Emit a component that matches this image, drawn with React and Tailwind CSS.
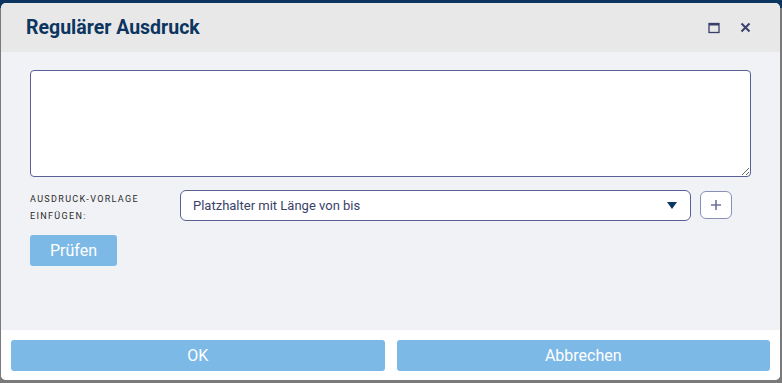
export default function App() {
  return (
    <div
      className="relative w-[782px] h-[383px] bg-[#7a7a7a] overflow-hidden"
      style={{ fontFamily: "Roboto, 'Liberation Sans', sans-serif" }}
    >
      <div className="h-[8px] bg-[#0c3560]" />

      <div className="absolute left-[1px] top-[3px] right-[2px] bottom-[3px] flex flex-col rounded-[5px] overflow-hidden bg-white">
        {/* header */}
        <div className="h-[49px] shrink-0 bg-[#e8e8e8] flex items-center pl-[25px] pr-[29px]">
          <h1 className="text-[19.5px] font-bold text-[#0c3560]">Regulärer Ausdruck</h1>
          <div className="ml-auto flex items-center gap-[20px] text-[#3b3f6b]">
            <svg width="12" height="12" viewBox="0 0 12 12">
              <rect x="1" y="1.5" width="10" height="9" fill="none" stroke="currentColor" strokeWidth="1.3" />
              <rect x="1" y="1" width="10" height="2.5" fill="currentColor" />
            </svg>
            <svg width="11" height="11" viewBox="0 0 11 11">
              <path d="M1.5 1.5 L9.5 9.5 M9.5 1.5 L1.5 9.5" stroke="currentColor" strokeWidth="2" />
            </svg>
          </div>
        </div>

        {/* body */}
        <div className="flex-1 bg-[#f1f2f6] pt-[18px] pl-[29px] pr-[29px]">
          <textarea
            className="block w-full h-[107px] bg-white border border-[#5a5f95] rounded-[4px] outline-none"
            defaultValue=""
          />

          <div className="flex items-start mt-[13px]">
            <label className="w-[150px] text-[9px] leading-[17px] tracking-[1.35px] text-[#2b2b2b] pt-[1px]">
              AUSDRUCK-VORLAGE
              <br />
              EINFÜGEN:
            </label>
            <div className="w-[511px] h-[31px] bg-white border border-[#5a5f95] rounded-[6px] flex items-center pl-[12px] pr-[13px]">
              <span className="text-[13px] text-[#3a3f6b]">Platzhalter mit Länge von bis</span>
              <svg className="ml-auto" width="10" height="7" viewBox="0 0 10 7">
                <path d="M0 0 H10 L5 7 Z" fill="#0c3560" />
              </svg>
            </div>
            <button className="ml-[9px] mt-[1px] w-[32px] h-[28px] border border-[#8a90b4] rounded-[6px] bg-white flex items-center justify-center">
              <svg width="12" height="12" viewBox="0 0 12 12">
                <path d="M6 1 V11 M1 6 H11" stroke="#6d7399" strokeWidth="1.6" />
              </svg>
            </button>
          </div>

          <button className="mt-[10px] w-[87px] h-[31px] bg-[#7db9e6] rounded-[3px] text-white text-[16px]">
            Prüfen
          </button>
        </div>

        {/* footer */}
        <div className="h-[50px] shrink-0 bg-white flex items-start gap-[12px] pt-[10px] px-[10px]">
          <button className="flex-1 h-[31px] bg-[#7db9e6] rounded-[3px] text-white text-[16px]">OK</button>
          <button className="flex-1 h-[31px] bg-[#7db9e6] rounded-[3px] text-white text-[16px]">Abbrechen</button>
        </div>
      </div>
    </div>
  );
}
